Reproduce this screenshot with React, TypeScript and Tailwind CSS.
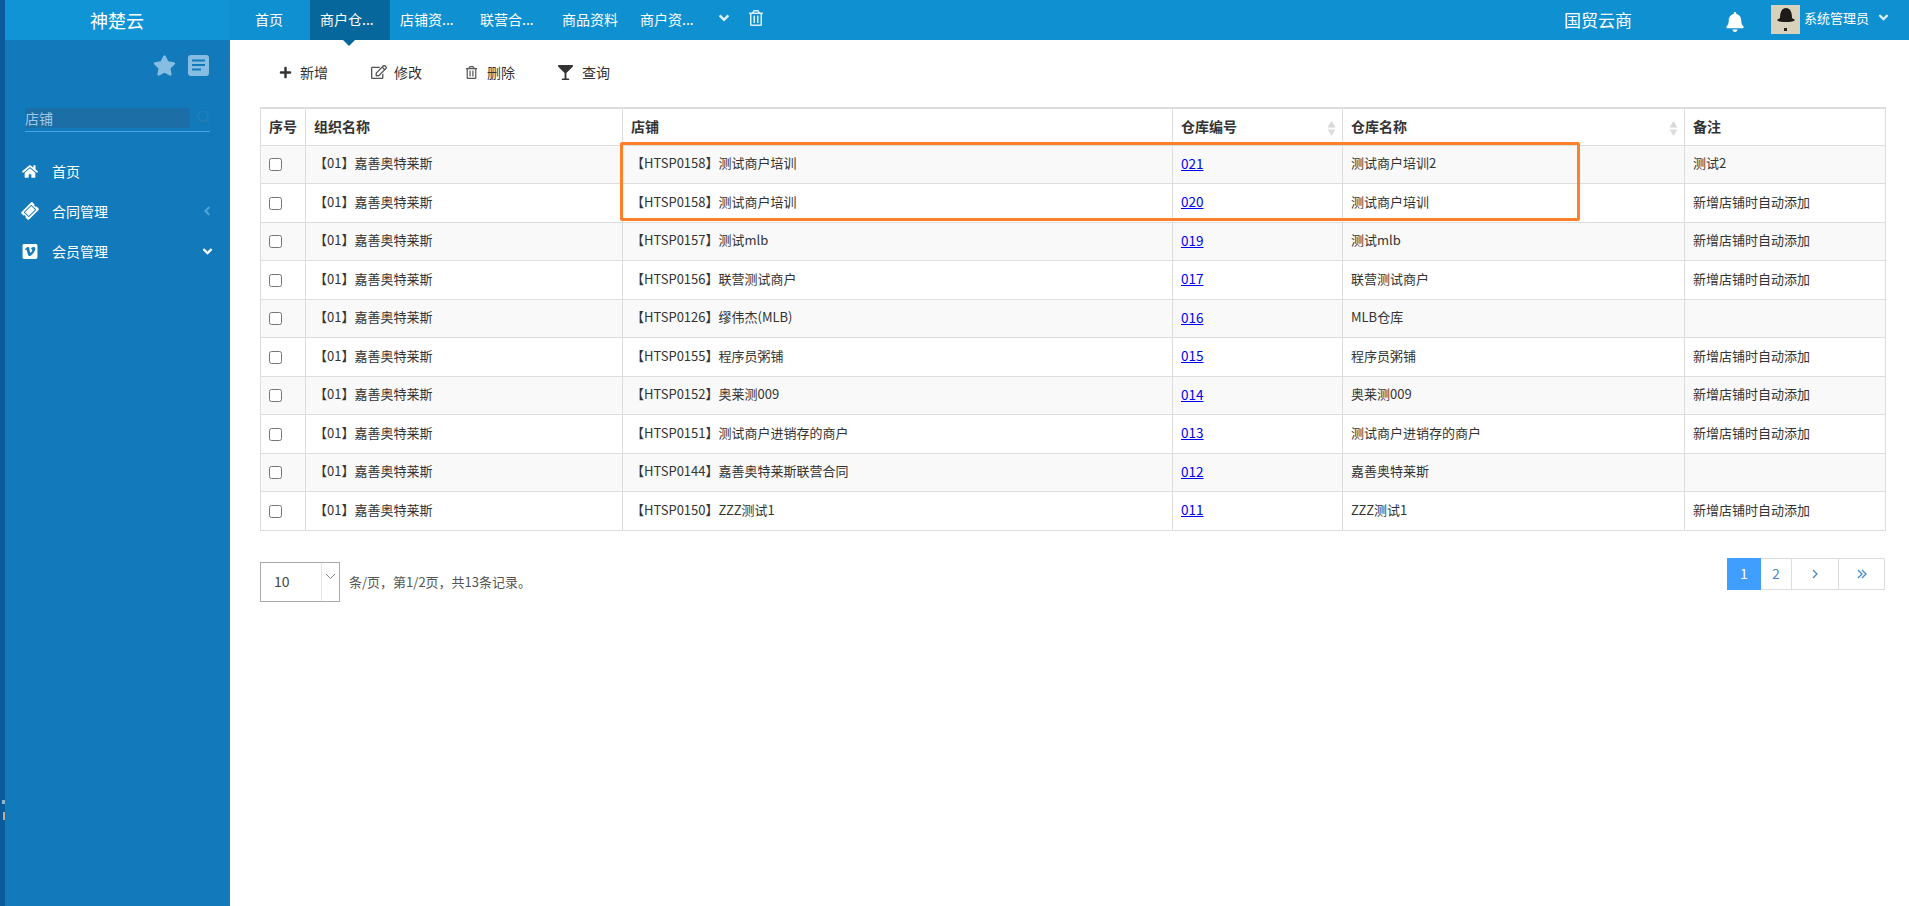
import React from "react";
import { FaPlus, FaRegEdit, FaRegTrashAlt, FaGlassMartini, FaStar, FaHome, FaTicketAlt, FaVimeoSquare, FaBell, FaAngleLeft, FaAngleDown } from "react-icons/fa";

const rows = [
  ["【HTSP0158】测试商户培训", "021", "测试商户培训2", "测试2"],
  ["【HTSP0158】测试商户培训", "020", "测试商户培训", "新增店铺时自动添加"],
  ["【HTSP0157】测试mlb", "019", "测试mlb", "新增店铺时自动添加"],
  ["【HTSP0156】联营测试商户", "017", "联营测试商户", "新增店铺时自动添加"],
  ["【HTSP0126】缪伟杰(MLB)", "016", "MLB仓库", ""],
  ["【HTSP0155】程序员粥铺", "015", "程序员粥铺", "新增店铺时自动添加"],
  ["【HTSP0152】奥莱测009", "014", "奥莱测009", "新增店铺时自动添加"],
  ["【HTSP0151】测试商户进销存的商户", "013", "测试商户进销存的商户", "新增店铺时自动添加"],
  ["【HTSP0144】嘉善奥特莱斯联营合同", "012", "嘉善奥特莱斯", ""],
  ["【HTSP0150】ZZZ测试1", "011", "ZZZ测试1", "新增店铺时自动添加"],
];

function Sort() {
  return (
    <svg width="9" height="15" viewBox="0 0 9 15" className="absolute right-[6px] top-[12px]">
      <path d="M4.500 0L8.500 6.500H.5z" fill="#d8d8d8" />
      <path d="M4.500 15L8.500 8.500H.5z" fill="#dcdcdc" />
    </svg>
  );
}

function Tab({ w, active, children }: { w: string; active?: boolean; children: React.ReactNode }) {
  return (
    <div className={`relative h-10 whitespace-nowrap pl-[10px] pt-[9px] text-[14px] leading-[20px] text-white ${w} ${active ? "bg-[#06679c]" : ""}`}>
      {children}
      {active && (
        <svg width="12" height="6" viewBox="0 0 12 6" className="absolute left-[33px] top-10">
          <path d="M0 0H12L6 6z" fill="#06679c" />
        </svg>
      )}
    </div>
  );
}

function Tool({ icon, label, w }: { icon: React.ReactNode; label: string; w: string }) {
  return (
    <div className={`flex items-center text-[14px] text-[#333] ${w}`}>
      {icon}
      <span>{label}</span>
    </div>
  );
}

function Chev({ d, w = 12 }: { d: string; w?: number }) {
  return (
    <svg width={w} height="12" viewBox={`0 0 ${w} 12`} fill="none" stroke="#428bca" strokeWidth="1.3">
      <path d={d} />
    </svg>
  );
}

export default function App() {
  return (
    <div
      className="relative flex h-[906px] w-[1909px] flex-col overflow-hidden bg-white"
      style={{ fontFamily: '"Noto Sans CJK SC", sans-serif' }}
    >
      <header className="flex h-10 shrink-0 bg-[#0f90d1]">
        <div className="flex h-10 w-[230px] shrink-0 items-center border-l-[5px] border-[#0a5a9c] bg-[#1094d6] pl-[85px] text-[18px] text-white">
          神楚云
        </div>
        <div className="ml-[15px] flex">
          <Tab w="w-[65px]">首页</Tab>
          <Tab w="w-[80px]" active>商户仓...</Tab>
          <Tab w="w-[80px]">店铺资...</Tab>
          <Tab w="w-[82px]">联营合...</Tab>
          <Tab w="w-[78px]">商品资料</Tab>
          <Tab w="w-[80px]">商户资...</Tab>
        </div>
        <div className="flex h-10 items-center pb-[4px]">
          <FaAngleDown className="ml-[6px] text-[16px] text-[#dcf0fb]" />
          <FaRegTrashAlt className="ml-[16px] text-[16px] text-[#dcf0fb]" />
        </div>
        <div className="ml-[800px] flex h-10 w-[68px] items-center whitespace-nowrap text-[17px] text-white">国贸云商</div>
        <FaBell className="ml-[93px] mt-[12px] text-[20px] text-white" />
        <div className="ml-[26px] mt-[5px] h-[29px] w-[29px] shrink-0 bg-[#d8d1bb]">
          <svg width="29" height="29" viewBox="0 0 29 29">
            <path d="M9 13C9 7 11 3 15 3s6 4 6 10l3 2c-1 1.500-4 2-9 2s-8-.5-9-2z" fill="#1d1a17" />
            <rect x="13" y="23" width="3" height="3" fill="#2a2622" />
          </svg>
        </div>
        <div className="ml-[4px] flex h-9 items-center whitespace-nowrap text-[13px] text-white">系统管理员</div>
        <FaAngleDown className="ml-[7px] mt-[10px] text-[15px] text-[#dcf0fb]" />
      </header>

      <div className="flex min-h-0 flex-1">
        <aside className="relative w-[230px] shrink-0 border-l-[5px] border-[#0a5a9c] bg-[#127abb]">
          <div className="flex h-[42px] items-center justify-end gap-[12px] pr-[21px] pt-[9px]">
            <FaStar className="text-[23px] text-[#86bde0]" />
            <svg width="21" height="21" viewBox="0 0 21 21">
              <rect width="21" height="21" rx="3" fill="#86bde0" />
              <path d="M4 5.500h13M4 10h13M4 14.500h9" stroke="#127abb" strokeWidth="2" />
            </svg>
          </div>
          <div className="ml-[20px] mt-[26px] flex h-[24px] w-[185px] border-b-[1.5px] border-[#4aa3e8]">
            <div className="h-[20px] w-[165px] bg-[#1c6fa6] text-[14px] leading-[20px] text-[#a0c8e4]">店铺</div>
            <svg width="13" height="15" viewBox="0 0 13 15" fill="none" stroke="#2a7fb6" strokeWidth="1.2" className="ml-[7px] mt-[2px]">
              <circle cx="6" cy="6" r="5" />
              <path d="M9.500 10L12 14" />
            </svg>
          </div>
          <nav className="mt-[19px] text-[14px] text-white">
            <div className="flex h-10 items-center">
              <FaHome className="ml-[17px] w-[16px] shrink-0 text-[15px]" />
              <span className="ml-[14px] shrink-0 whitespace-nowrap">首页</span>
            </div>
            <div className="flex h-10 items-center">
              <FaTicketAlt className="ml-[17px] w-[16px] shrink-0 -rotate-45 text-[16px]" />
              <span className="ml-[14px] shrink-0 whitespace-nowrap">合同管理</span>
              <FaAngleLeft className="ml-[92px] shrink-0 text-[14px] text-[#4da3d9]" />
            </div>
            <div className="flex h-10 items-center">
              <FaVimeoSquare className="ml-[17px] w-[16px] shrink-0 text-[17px]" />
              <span className="ml-[14px] shrink-0 whitespace-nowrap">会员管理</span>
              <FaAngleDown className="ml-[92px] shrink-0 text-[15px]" />
            </div>
          </nav>
          <div className="absolute -left-[3px] top-[760px] h-[4px] w-[3px] bg-[#8fb4cf]" />
          <div className="absolute -left-[2px] top-[772px] h-[8px] w-[2px] bg-[#c9a887]" />
        </aside>

        <main className="relative min-w-0 flex-1 pl-[30px]">
          <div className="flex h-[64px] items-center">
            <div className="ml-[19px] flex">
              <Tool w="w-[90px]" label="新增" icon={<FaPlus className="mr-[8px] text-[13px] text-[#333]" />} />
              <Tool w="w-[96px]" label="修改" icon={<FaRegEdit className="ml-[2px] mr-[7px] text-[16px] text-[#555]" />} />
              <Tool w="w-[93px]" label="删除" icon={<FaRegTrashAlt className="mr-[9px] text-[13px] text-[#555]" />} />
              <Tool w="w-[80px]" label="查询" icon={<FaGlassMartini className="mr-[9px] text-[15px] text-[#333]" />} />
            </div>
          </div>
          <table className="mt-[3px] w-[1625px] table-fixed border-collapse border-t-2 border-[#ddd] text-[13px] text-[#333]">
            <colgroup>
              <col className="w-[45px]" />
              <col className="w-[317px]" />
              <col className="w-[550px]" />
              <col className="w-[170px]" />
              <col className="w-[342px]" />
              <col className="w-[201px]" />
            </colgroup>
            <thead>
              <tr className="h-[37px] text-left text-[14px] font-bold">
                <th className="border border-[#ddd] pl-[8px] font-bold">序号</th>
                <th className="border border-[#ddd] pl-[8px] font-bold">组织名称</th>
                <th className="border border-[#ddd] pl-[8px] font-bold">店铺</th>
                <th className="relative border border-[#ddd] pl-[8px] font-bold">仓库编号<Sort /></th>
                <th className="relative border border-[#ddd] pl-[8px] font-bold">仓库名称<Sort /></th>
                <th className="border border-[#ddd] pl-[8px] font-bold">备注</th>
              </tr>
            </thead>
            <tbody>
              {rows.map((r, i) => (
                <tr key={i} className={`h-[38.5px] ${i % 2 === 0 ? "bg-[#f9f9f9]" : "bg-white"}`}>
                  <td className="border border-[#ddd] pl-[8px]"><input type="checkbox" className="mt-[1px] block h-[13px] w-[13px]" /></td>
                  <td className="border border-[#ddd] pb-[3px] pl-[8px]">【01】嘉善奥特莱斯</td>
                  <td className="border border-[#ddd] pb-[3px] pl-[8px]">{r[0]}</td>
                  <td className="border border-[#ddd] pb-[3px] pl-[8px]"><a href="#" className="text-[13.5px] text-[#0000ee] underline">{r[1]}</a></td>
                  <td className="border border-[#ddd] pb-[3px] pl-[8px]">{r[2]}</td>
                  <td className="border border-[#ddd] pb-[3px] pl-[8px]">{r[3]}</td>
                </tr>
              ))}
            </tbody>
          </table>
          <div className="mt-[27px] flex w-[1625px] items-start justify-between">
            <div className="mt-[4px] flex items-center">
              <div className="flex h-[40px] w-[80px] border border-[#aaa] text-[14px] text-[#444]">
                <div className="flex w-[60px] items-center pl-[13px]">10</div>
                <div className="w-[18px] border-l border-[#e5e5e5] pl-[3px] pt-[10px]">
                  <svg width="11" height="7" viewBox="0 0 11 7"><path d="M1 1l4.500 4.500L10 1" stroke="#888" fill="none" /></svg>
                </div>
              </div>
              <span className="ml-[9px] whitespace-nowrap text-[13px] text-[#555]">条/页，第1/2页，共13条记录。</span>
            </div>
            <div className="flex h-[32px] text-[14px] text-[#428bca]">
              <div className="flex w-[34px] items-center justify-center bg-[#409eff] text-white">1</div>
              <div className="flex w-[31px] items-center justify-center border-y border-r border-[#ddd]">2</div>
              <div className="flex w-[47px] items-center justify-center border-y border-r border-[#ddd]"><Chev w={8} d="M2 2l4 4-4 4" /></div>
              <div className="flex w-[46px] items-center justify-center border-y border-r border-[#ddd]"><Chev d="M2 2l4 4-4 4M6 2l4 4-4 4" /></div>
            </div>
          </div>
        </main>
      </div>
      <div className="absolute left-[620px] top-[142px] h-[79px] w-[960px] rounded-[2px] border-[3px] border-[#ff7f2a]" />
    </div>
  );
}
